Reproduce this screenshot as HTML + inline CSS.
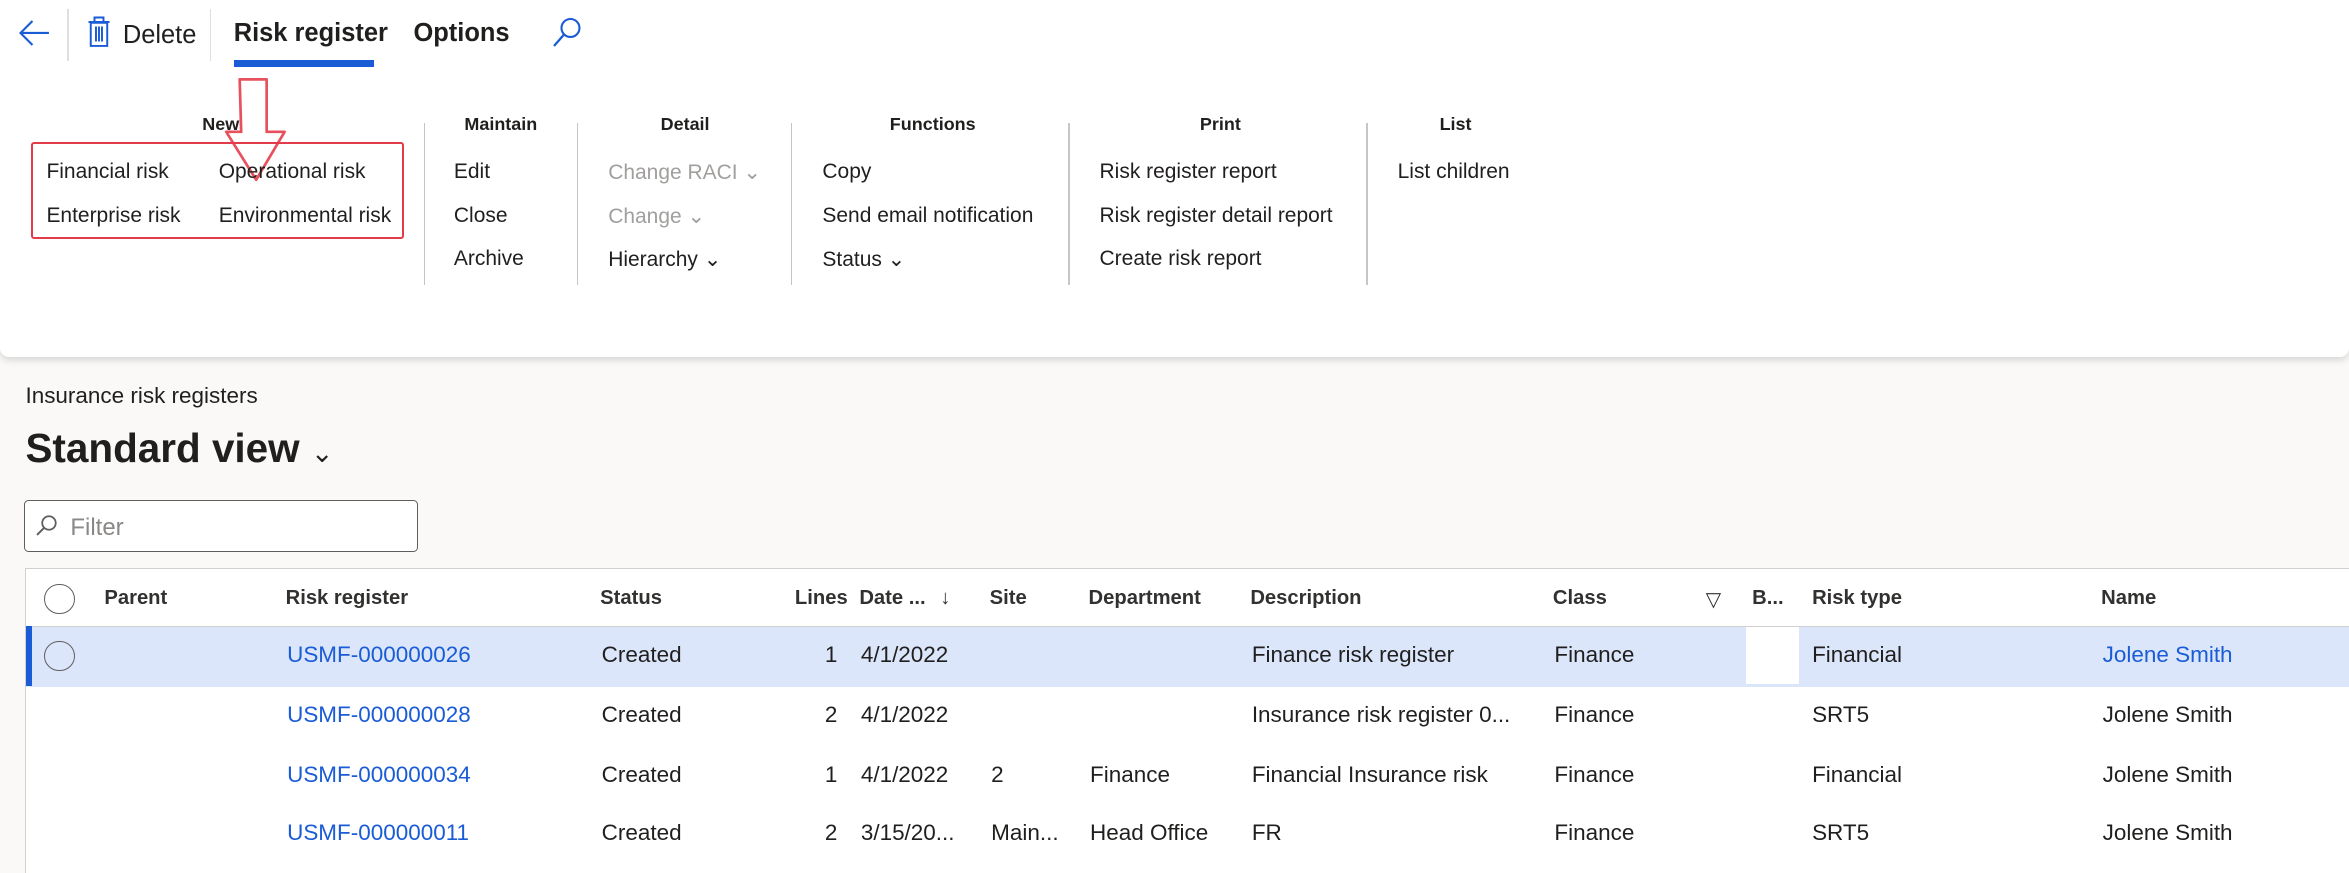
<!DOCTYPE html>
<html><head><meta charset="utf-8"><style>
html,body{margin:0;padding:0;background:#faf9f8;overflow:hidden}
body{width:2349px;height:873px;font-family:"Liberation Sans",sans-serif;color:#201f1e}
#w{zoom:1.498;width:1568px;height:583px;position:relative}
.a{position:absolute;white-space:nowrap}
.top{position:absolute;left:0;top:0;width:1568px;height:238px;background:#fff;box-shadow:0 2px 5px rgba(0,0,0,.15);border-radius:0 0 6px 6px}
.t{font-size:14px}
.h{font-size:12px;font-weight:bold}
.dis{color:#a19f9d}
.sep{position:absolute;width:1px;background:#c8c6c4}
.grid{position:absolute;left:17px;top:379px;width:1560px;height:210px;background:#fff;border:1px solid #d2d0ce}
.ch{font-size:13.5px;font-weight:bold;color:#323130;top:12px}
.c{font-size:15px;}
.lnk{color:#1a5bd6}
.rc{width:19px;height:19px;border:1.3px solid #605e5c;border-radius:50%;position:absolute}
</style></head><body><div id="w">
<div class="top">
<svg class="a" style="left:11px;top:12px" width="24" height="20"><path d="M22 10H3M11 2L3 10l8 8" stroke="#1a5bd6" stroke-width="1.4" fill="none"/></svg>
<div class="sep" style="left:45px;top:6px;height:35px;background:#e1dfdd"></div>
<svg class="a" style="left:58px;top:11px" width="16" height="21"><path d="M1 4h14M5 4V1h6v3M2.5 4.5h11V20h-11z M6 7v10M8 7v10M10 7v10" stroke="#1a5bd6" stroke-width="1.3" fill="none"/></svg>
<div class="a" style="left:82px;top:14px;font-size:17px">Delete</div>
<div class="sep" style="left:140px;top:6px;height:35px;background:#e1dfdd"></div>
<div class="a" style="left:156px;top:13px;font-size:17px;font-weight:bold">Risk register</div>
<div class="a" style="left:156px;top:40px;width:94px;height:5px;background:#1a5bd6"></div>
<div class="a" style="left:276px;top:13px;font-size:17px;font-weight:bold">Options</div>
<svg class="a" style="left:368px;top:11px" width="22" height="22"><circle cx="13" cy="8" r="6" stroke="#1a5bd6" stroke-width="1.4" fill="none"/><path d="M9 12L2 20" stroke="#1a5bd6" stroke-width="1.5"/></svg>
<svg class="a" style="left:0;top:0" width="300" height="130"><path d="M160 53h18v35h12l-19 32-20-32h10z" stroke="#e8505e" stroke-width="1.8" fill="none" stroke-linejoin="round"/></svg>
<div class="a h" style="left:135px;top:76px">New</div>
<div class="a" style="left:21px;top:95px;width:246px;height:62px;border:2px solid #e33b4a;border-radius:2px"></div>
<div class="a t" style="left:31px;top:107px">Financial risk</div>
<div class="a t" style="left:146px;top:107px">Operational risk</div>
<div class="a t" style="left:31px;top:136px">Enterprise risk</div>
<div class="a t" style="left:146px;top:136px">Environmental risk</div>
<div class="sep" style="left:283px;top:82px;height:108px"></div>
<div class="a h" style="left:310px;top:76px">Maintain</div>
<div class="a t" style="left:303px;top:107px">Edit</div>
<div class="a t" style="left:303px;top:136px">Close</div>
<div class="a t" style="left:303px;top:165px">Archive</div>
<div class="sep" style="left:385px;top:82px;height:108px"></div>
<div class="a h" style="left:441px;top:76px">Detail</div>
<div class="a t dis" style="left:406px;top:107px">Change RACI &#8964;</div>
<div class="a t dis" style="left:406px;top:136px">Change &#8964;</div>
<div class="a t" style="left:406px;top:165px">Hierarchy &#8964;</div>
<div class="sep" style="left:528px;top:82px;height:108px"></div>
<div class="a h" style="left:594px;top:76px">Functions</div>
<div class="a t" style="left:549px;top:107px">Copy</div>
<div class="a t" style="left:549px;top:136px">Send email notification</div>
<div class="a t" style="left:549px;top:165px">Status &#8964;</div>
<div class="sep" style="left:713px;top:82px;height:108px"></div>
<div class="a h" style="left:801px;top:76px">Print</div>
<div class="a t" style="left:734px;top:107px">Risk register report</div>
<div class="a t" style="left:734px;top:136px">Risk register detail report</div>
<div class="a t" style="left:734px;top:165px">Create risk report</div>
<div class="sep" style="left:912px;top:82px;height:108px"></div>
<div class="a h" style="left:961px;top:76px">List</div>
<div class="a t" style="left:933px;top:107px">List children</div>
</div>
<div class="a" style="left:17px;top:256px;font-size:15px">Insurance risk registers</div>
<div class="a" style="left:17px;top:284px;font-size:27px;font-weight:bold;font-weight:600">Standard view <span style="font-size:18px;font-weight:normal">&#8964;</span></div>
<div class="a" style="left:16px;top:334px;width:262px;height:33px;border:1px solid #605e5c;border-radius:3px;background:#fff"></div>
<svg class="a" style="left:23px;top:343px" width="16" height="16"><circle cx="10" cy="6" r="4.5" stroke="#605e5c" fill="none" stroke-width="1.2"/><path d="M7 9l-5 5" stroke="#605e5c" stroke-width="1.3"/></svg>
<div class="a" style="left:47px;top:343px;font-size:16px;color:#8a8886">Filter</div>
<div class="grid">
<div class="rc" style="left:12px;top:10px"></div>
<div class="a ch" style="left:52px">Parent</div>
<div class="a ch" style="left:173px">Risk register</div>
<div class="a ch" style="left:383px">Status</div>
<div class="a ch" style="left:513px">Lines</div>
<div class="a ch" style="left:556px">Date ... <span style="font-weight:normal;margin-left:6px">&#8595;</span></div>
<div class="a ch" style="left:643px">Site</div>
<div class="a ch" style="left:709px">Department</div>
<div class="a ch" style="left:817px">Description</div>
<div class="a ch" style="left:1019px">Class</div>
<div class="a ch" style="left:1121px;font-weight:normal">&#9661;</div>
<div class="a ch" style="left:1152px">B...</div>
<div class="a ch" style="left:1192px">Risk type</div>
<div class="a ch" style="left:1385px">Name</div>
<div class="a" style="left:0;top:38px;width:1560px;height:40px;background:#dbe6fb;border-top:1px solid #d2d0ce"></div>
<div class="a" style="left:0;top:38px;width:4px;height:40px;background:#1a5bd6"></div>
<div class="a" style="left:1148px;top:39px;width:35px;height:38px;background:#fff"></div>
<div class="rc" style="left:12px;top:48px"></div>
<div class="a c lnk" style="left:174px;top:49px">USMF-000000026</div><div class="a c" style="left:384px;top:49px">Created</div><div class="a c" style="left:533px;top:49px">1</div><div class="a c" style="left:557px;top:49px">4/1/2022</div><div class="a c" style="left:818px;top:49px">Finance risk register</div><div class="a c" style="left:1020px;top:49px">Finance</div><div class="a c" style="left:1192px;top:49px">Financial</div><div class="a c lnk" style="left:1386px;top:49px">Jolene Smith</div>
<div class="a c lnk" style="left:174px;top:89px">USMF-000000028</div><div class="a c" style="left:384px;top:89px">Created</div><div class="a c" style="left:533px;top:89px">2</div><div class="a c" style="left:557px;top:89px">4/1/2022</div><div class="a c" style="left:818px;top:89px">Insurance risk register 0...</div><div class="a c" style="left:1020px;top:89px">Finance</div><div class="a c" style="left:1192px;top:89px">SRT5</div><div class="a c" style="left:1386px;top:89px">Jolene Smith</div>
<div class="a c lnk" style="left:174px;top:129px">USMF-000000034</div><div class="a c" style="left:384px;top:129px">Created</div><div class="a c" style="left:533px;top:129px">1</div><div class="a c" style="left:557px;top:129px">4/1/2022</div><div class="a c" style="left:644px;top:129px">2</div><div class="a c" style="left:710px;top:129px">Finance</div><div class="a c" style="left:818px;top:129px">Financial Insurance risk</div><div class="a c" style="left:1020px;top:129px">Finance</div><div class="a c" style="left:1192px;top:129px">Financial</div><div class="a c" style="left:1386px;top:129px">Jolene Smith</div>
<div class="a c lnk" style="left:174px;top:168px">USMF-000000011</div><div class="a c" style="left:384px;top:168px">Created</div><div class="a c" style="left:533px;top:168px">2</div><div class="a c" style="left:557px;top:168px">3/15/20...</div><div class="a c" style="left:644px;top:168px">Main...</div><div class="a c" style="left:710px;top:168px">Head Office</div><div class="a c" style="left:818px;top:168px">FR</div><div class="a c" style="left:1020px;top:168px">Finance</div><div class="a c" style="left:1192px;top:168px">SRT5</div><div class="a c" style="left:1386px;top:168px">Jolene Smith</div>
</div>
</div></body></html>
